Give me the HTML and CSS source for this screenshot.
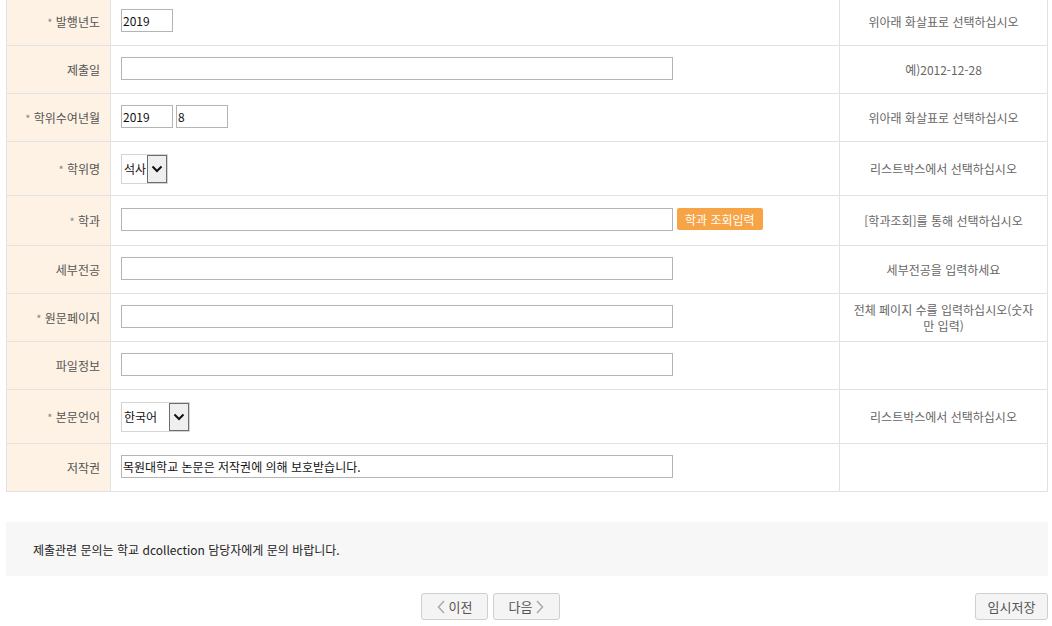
FILE: index.html
```html
<!DOCTYPE html>
<html lang="ko">
<head>
    <meta charset="UTF-8">
    <title>학위논문 제출</title>
    <link rel="stylesheet" href="styles.css">
</head>
<body>
    <div class="page">
        <table class="form-table">
            <colgroup>
                <col class="col-label">
                <col class="col-field">
                <col class="col-note">
            </colgroup>
            <tr>
                <th><span class="req">*</span> 발행년도</th>
                <td><input class="inp short" type="text" value="2019"></td>
                <td class="note">위아래 화살표로 선택하십시오</td>
            </tr>
            <tr>
                <th>제출일</th>
                <td><input class="inp long" type="text"></td>
                <td class="note">예)2012-12-28</td>
            </tr>
            <tr>
                <th><span class="req">*</span> 학위수여년월</th>
                <td>
                    <div class="pair">
                        <input class="inp short" type="text" value="2019">
                        <input class="inp short" type="text" value="8">
                    </div>
                </td>
                <td class="note">위아래 화살표로 선택하십시오</td>
            </tr>
            <tr class="tall">
                <th><span class="req">*</span> 학위명</th>
                <td>
                    <div class="fake-select degree">
                        <span class="sel-text">석사</span>
                        <span class="sel-arrow"><svg width="12" height="8" viewBox="0 0 12 8"><path d="M1.5 1.5 L6 6 L10.5 1.5" fill="none" stroke="#111" stroke-width="2"/></svg></span>
                    </div>
                </td>
                <td class="note">리스트박스에서 선택하십시오</td>
            </tr>
            <tr class="mid">
                <th><span class="req">*</span> 학과</th>
                <td>
                    <div class="pair">
                        <input class="inp long" type="text">
                        <button class="btn-orange" type="button">학과 조회입력</button>
                    </div>
                </td>
                <td class="note">[학과조회]를 통해 선택하십시오</td>
            </tr>
            <tr>
                <th>세부전공</th>
                <td><input class="inp long" type="text"></td>
                <td class="note">세부전공을 입력하세요</td>
            </tr>
            <tr>
                <th><span class="req">*</span> 원문페이지</th>
                <td><input class="inp long" type="text"></td>
                <td class="note"><span class="line">전체 페이지 수를 입력하십시오(숫자</span><span class="line">만 입력)</span></td>
            </tr>
            <tr>
                <th>파일정보</th>
                <td><input class="inp long" type="text"></td>
                <td class="note"></td>
            </tr>
            <tr class="tall">
                <th><span class="req">*</span> 본문언어</th>
                <td>
                    <div class="fake-select lang">
                        <span class="sel-text">한국어</span>
                        <span class="sel-arrow"><svg width="12" height="8" viewBox="0 0 12 8"><path d="M1.5 1.5 L6 6 L10.5 1.5" fill="none" stroke="#111" stroke-width="2"/></svg></span>
                    </div>
                </td>
                <td class="note">리스트박스에서 선택하십시오</td>
            </tr>
            <tr>
                <th>저작권</th>
                <td><input class="inp long" type="text" value="목원대학교 논문은 저작권에 의해 보호받습니다."></td>
                <td class="note"></td>
            </tr>
        </table>

        <div class="info-box">제출관련 문의는 학교 dcollection 담당자에게 문의 바랍니다.</div>

        <div class="actions">
            <div class="nav">
                <button class="btn-gray" type="button">
                    <svg class="chev" width="8" height="14" viewBox="0 0 8 14"><path d="M7 1 L1.5 7 L7 13" fill="none" stroke="#aaa" stroke-width="1.5"/></svg>
                    <span>이전</span>
                </button>
                <button class="btn-gray" type="button">
                    <span>다음</span>
                    <svg class="chev" width="8" height="14" viewBox="0 0 8 14"><path d="M1 1 L6.5 7 L1 13" fill="none" stroke="#aaa" stroke-width="1.5"/></svg>
                </button>
            </div>
            <button class="btn-gray save" type="button">임시저장</button>
        </div>
    </div>
</body>
</html>
```

FILE: styles.css
```css
body {
    margin: 0;
    background: #fff;
    font-family: "Noto Sans CJK KR", "Noto Sans", sans-serif;
    font-size: 12px;
    color: #333;
}

.page {
    margin: -3px 4px 0 6px;
}

.form-table {
    width: 1042px;
    border-collapse: collapse;
    table-layout: fixed;
}

.col-label { width: 104px; }
.col-note { width: 208px; }

.form-table th,
.form-table td {
    border: 1px solid #e2e2e2;
    height: 47px;
    padding: 0;
    vertical-align: middle;
}

.form-table tr.tall th,
.form-table tr.tall td { height: 53px; }

.form-table tr.mid th,
.form-table tr.mid td { height: 49px; }

.form-table th {
    background: #fdf2e3;
    color: #555;
    font-weight: normal;
    text-align: right;
    padding-right: 10px;
}

.req {
    color: #888;
    font-size: 11px;
}

.form-table td {
    padding-left: 10px;
}

.form-table td.note {
    padding: 0 6px;
    text-align: center;
    color: #666;
}

.note .line {
    display: block;
    line-height: 16px;
}

.pair {
    display: flex;
    align-items: center;
    gap: 3px;
    margin-bottom: 3px;
}

.inp {
    box-sizing: border-box;
    height: 23px;
    border: 1px solid #b4b4b4;
    padding: 0 1px;
    font-family: "Noto Sans CJK KR", "Noto Sans", sans-serif;
    font-size: 12px;
    color: #111;
    display: block;
    margin: 0 0 3px;
}

.pair .inp { margin-bottom: 0; }

.inp.short { width: 52px; }
.inp.long { width: 552px; }

.fake-select {
    box-sizing: border-box;
    height: 30px;
    display: flex;
    border: 1px solid #d4d4d4;
    background: #fff;
}

.fake-select.degree { width: 47px; }
.fake-select.lang { width: 69px; }

.sel-text {
    flex: 1;
    display: flex;
    align-items: center;
    padding-left: 2px;
    font-size: 12px;
    color: #111;
    white-space: nowrap;
}

.sel-arrow {
    width: 18px;
    border: 1px solid #6d6d6d;
    background: #efefef;
    display: flex;
    align-items: center;
    justify-content: center;
}

.btn-orange {
    height: 22px;
    padding: 0 8px;
    margin-left: 1px;
    border: 0;
    border-radius: 2px;
    background: #f7a447;
    color: #fff;
    font-family: "Noto Sans CJK KR", "Noto Sans", sans-serif;
    font-size: 12px;
}

.info-box {
    margin-top: 30px;
    height: 54px;
    width: 1042px;
    background: #f7f7f7;
    display: flex;
    align-items: center;
    padding-left: 27px;
    box-sizing: border-box;
    color: #222;
}

.actions {
    width: 1042px;
    margin-top: 17px;
    display: grid;
    grid-template-columns: 1fr auto;
}

.nav {
    display: flex;
    justify-content: center;
    gap: 5px;
}

.btn-gray {
    box-sizing: border-box;
    height: 27px;
    width: 67px;
    border: 1px solid #cfcfcf;
    border-radius: 3px;
    background: #f4f4f4;
    color: #555;
    font-family: "Noto Sans CJK KR", "Noto Sans", sans-serif;
    font-size: 13px;
    padding: 0;
    display: inline-flex;
    align-items: center;
    justify-content: center;
    gap: 4px;
}

.btn-gray.save {
    width: 73px;
}
```
